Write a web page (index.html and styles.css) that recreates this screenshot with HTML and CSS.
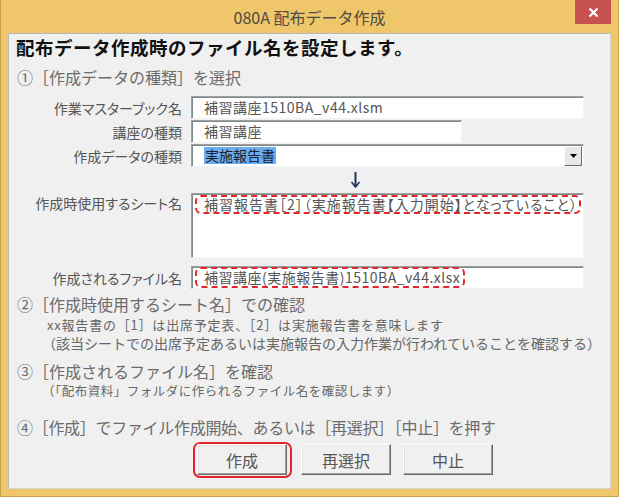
FILE: index.html
```html
<!DOCTYPE html>
<html lang="ja">

<head>
	<meta charset="UTF-8">
	<title>080A 配布データ作成</title>
	<link rel="stylesheet" href="styles.css">
</head>

<body>
	<div class="window">
		<!-- Title bar -->
		<div class="titlebar">
			<span class="title">080A 配布データ作成</span>
			<span class="close">
				<svg width="11" height="11" viewBox="0 0 11 11">
					<path d="M1.5 1.5L9.5 9.5M9.5 1.5L1.5 9.5" stroke="#fff" stroke-width="2.2" />
				</svg>
			</span>
		</div>

		<div class="client">
			<h1 class="heading">配布データ作成時のファイル名を設定します。</h1>
			<p class="step">①［作成データの種類］を選択</p>

			<div class="form">
				<label class="field-label">作業マスターブック名</label>
				<div class="box">補習講座1510BA_v44.xlsm</div>

				<label class="field-label">講座の種類</label>
				<div class="box short">補習講座</div>

				<label class="field-label">作成データの種類</label>
				<div class="box select">
					<span class="selected">実施報告書</span>
					<span class="drop-btn">
						<svg width="7" height="4" viewBox="0 0 7 4">
							<path d="M0 0H7L3.5 4Z" fill="#000" />
						</svg>
					</span>
				</div>

				<span></span>
				<div class="arrow">
					<svg width="11" height="16" viewBox="0 0 11 16">
						<path d="M5.5 0V14.5" stroke="#1f3558" stroke-width="2" />
						<path d="M1.5 10L5.5 15L9.5 10" fill="none" stroke="#1f3558" stroke-width="1.6" />
					</svg>
				</div>

				<label class="field-label top">作成時使用するシート名</label>
				<div class="box area"><span class="mark">補習報告書［2］（実施報告書【入力開始】となっていること）</span></div>

				<label class="field-label file-label">作成されるファイル名</label>
				<div class="box file"><span class="mark">補習講座(実施報告書)1510BA_v44.xlsx</span></div>
			</div>

			<p class="step sec2">②［作成時使用するシート名］での確認</p>
			<p class="note first">xx報告書の［1］は出席予定表、［2］は実施報告書を意味します</p>
			<p class="note paren">（該当シートでの出席予定あるいは実施報告の入力作業が行われていることを確認する）</p>

			<p class="step sec3">③［作成されるファイル名］を確認</p>
			<p class="note small">（「配布資料」フォルダに作られるファイル名を確認します）</p>

			<p class="step sec4">④［作成］でファイル作成開始、あるいは［再選択］［中止］を押す</p>

			<div class="actions">
				<span class="focus-ring"><button class="btn">作成</button></span>
				<button class="btn">再選択</button>
				<button class="btn">中止</button>
			</div>
		</div>
	</div>
</body>

</html>
```

FILE: styles.css
```css
body {
	margin: 0;
	font-family: "Noto Sans CJK JP", "Noto Sans", sans-serif;
}

.window {
	width: 619px;
	height: 497px;
	box-sizing: border-box;
	background-color: #f0c66a;
	border: 1px solid #c9a24e;
	border-top: none;
	display: flex;
	flex-direction: column;
}

/* Title bar */
.titlebar {
	height: 33px;
	display: grid;
	grid-template-columns: 1fr auto 1fr;
	align-items: start;
}

.title {
	grid-column: 2;
	font-size: 16px;
	line-height: 34px;
	color: #4f4c44;
}

.close {
	grid-column: 3;
	justify-self: end;
	width: 36px;
	height: 24px;
	margin-right: 7px;
	background-color: #c75050;
	display: flex;
	align-items: center;
	justify-content: center;
}

/* Client area */
.client {
	flex: 1;
	margin: 0 7px 7px;
	background-color: #f0f0f0;
	border: 1px solid #b9b9b9;
	border-right-color: #d6d6d6;
	border-bottom-color: #d6d6d6;
}

.heading {
	margin: 0;
	padding-left: 7px;
	font-size: 18.5px;
	font-weight: bold;
	line-height: 26px;
	letter-spacing: 0.5px;
	color: #111;
}

.step {
	margin: 6px 0 0;
	padding-left: 8px;
	font-size: 16px;
	line-height: 22px;
	color: #6b6b6b;
}

.sec2 {
	margin-top: 4px;
}

.sec3 {
	line-height: 20px;
	margin-top: 9px;
}

.sec4 {
	line-height: 20px;
	margin-top: 17px;
	letter-spacing: -0.3px;
}

.note {
	margin: 0;
	padding-left: 38px;
	font-size: 13px;
	line-height: 18px;
	color: #666;
}

.note.first {
	margin-top: 1px;
	letter-spacing: 0.8px;
}

.note.paren {
	padding-left: 33px;
	font-size: 14px;
}

.note.small {
	margin-top: 1px;
	padding-left: 33px;
	font-size: 12.5px;
	letter-spacing: 0.5px;
}

/* Form */
.form {
	margin-top: 8px;
	display: grid;
	grid-template-columns: 173px 393px;
	column-gap: 9px;
	row-gap: 1px;
	align-items: center;
}

.field-label {
	text-align: right;
	font-size: 14px;
	line-height: 20px;
	color: #555;
	font-feature-settings: "palt";
}

.field-label.top {
	align-self: start;
}

.field-label.file-label,
.box.file {
	margin-top: 7px;
}

.box {
	height: 23px;
	box-sizing: border-box;
	background-color: #fff;
	border: 1px solid;
	border-color: #a0a0a0 #f4f4f4 #f4f4f4 #a0a0a0;
	box-shadow: inset 1px 1px 0 #7c8a8a;
	padding-left: 12px;
	font-size: 14px;
	line-height: 21px;
	letter-spacing: 0.5px;
	color: #555;
	font-feature-settings: "palt";
	white-space: nowrap;
	overflow: hidden;
}

.box.short {
	width: 271px;
}

.box.select {
	display: flex;
	align-items: center;
	padding-right: 1px;
	letter-spacing: 0;
}

.selected {
	background-color: #6aaef0;
	color: #1d1d2d;
	line-height: 17px;
	padding: 0 1px;
}

.drop-btn {
	margin-left: auto;
	width: 18px;
	height: 20px;
	box-sizing: border-box;
	background-color: #e8e8e8;
	border: 1px solid;
	border-color: #fff #696969 #696969 #fff;
	display: flex;
	align-items: center;
	justify-content: center;
}

.arrow {
	height: 24px;
	display: flex;
	align-items: center;
	padding-left: 159px;
}

.box.area {
	height: 65px;
	align-self: start;
	padding: 0 0 0 3px;
}

.box.file {
	padding-left: 3px;
}

.mark {
	display: inline-block;
	border: 2px dashed #e3262b;
	border-radius: 6px;
	padding: 0 3px 0 7px;
	line-height: 15px;
}

.box.area .mark {
	letter-spacing: 1px;
	padding-right: 1px;
}

.box.file .mark {
	line-height: 17px;
}

/* Buttons */
.actions {
	margin-top: 5px;
	display: flex;
	align-items: flex-start;
	padding-left: 184px;
}

.focus-ring {
	display: flex;
	border: 2px solid #e4252b;
	border-radius: 7px;
	padding: 0 3px 1px 2px;
}

.btn {
	width: 90px;
	height: 31px;
	box-sizing: border-box;
	padding: 0;
	background-color: #f0f0f0;
	border: 1px solid;
	border-color: #fff #696969 #696969 #fff;
	box-shadow: inset -1px -1px 0 #a0a0a0, inset 1px 1px 0 #e3e3e3;
	font-family: "Noto Sans CJK JP", sans-serif;
	font-size: 16px;
	color: #555;
}

.actions > .btn {
	margin-top: 2px;
	margin-left: 9px;
}

.actions > .btn + .btn {
	margin-left: 12px;
}
```
